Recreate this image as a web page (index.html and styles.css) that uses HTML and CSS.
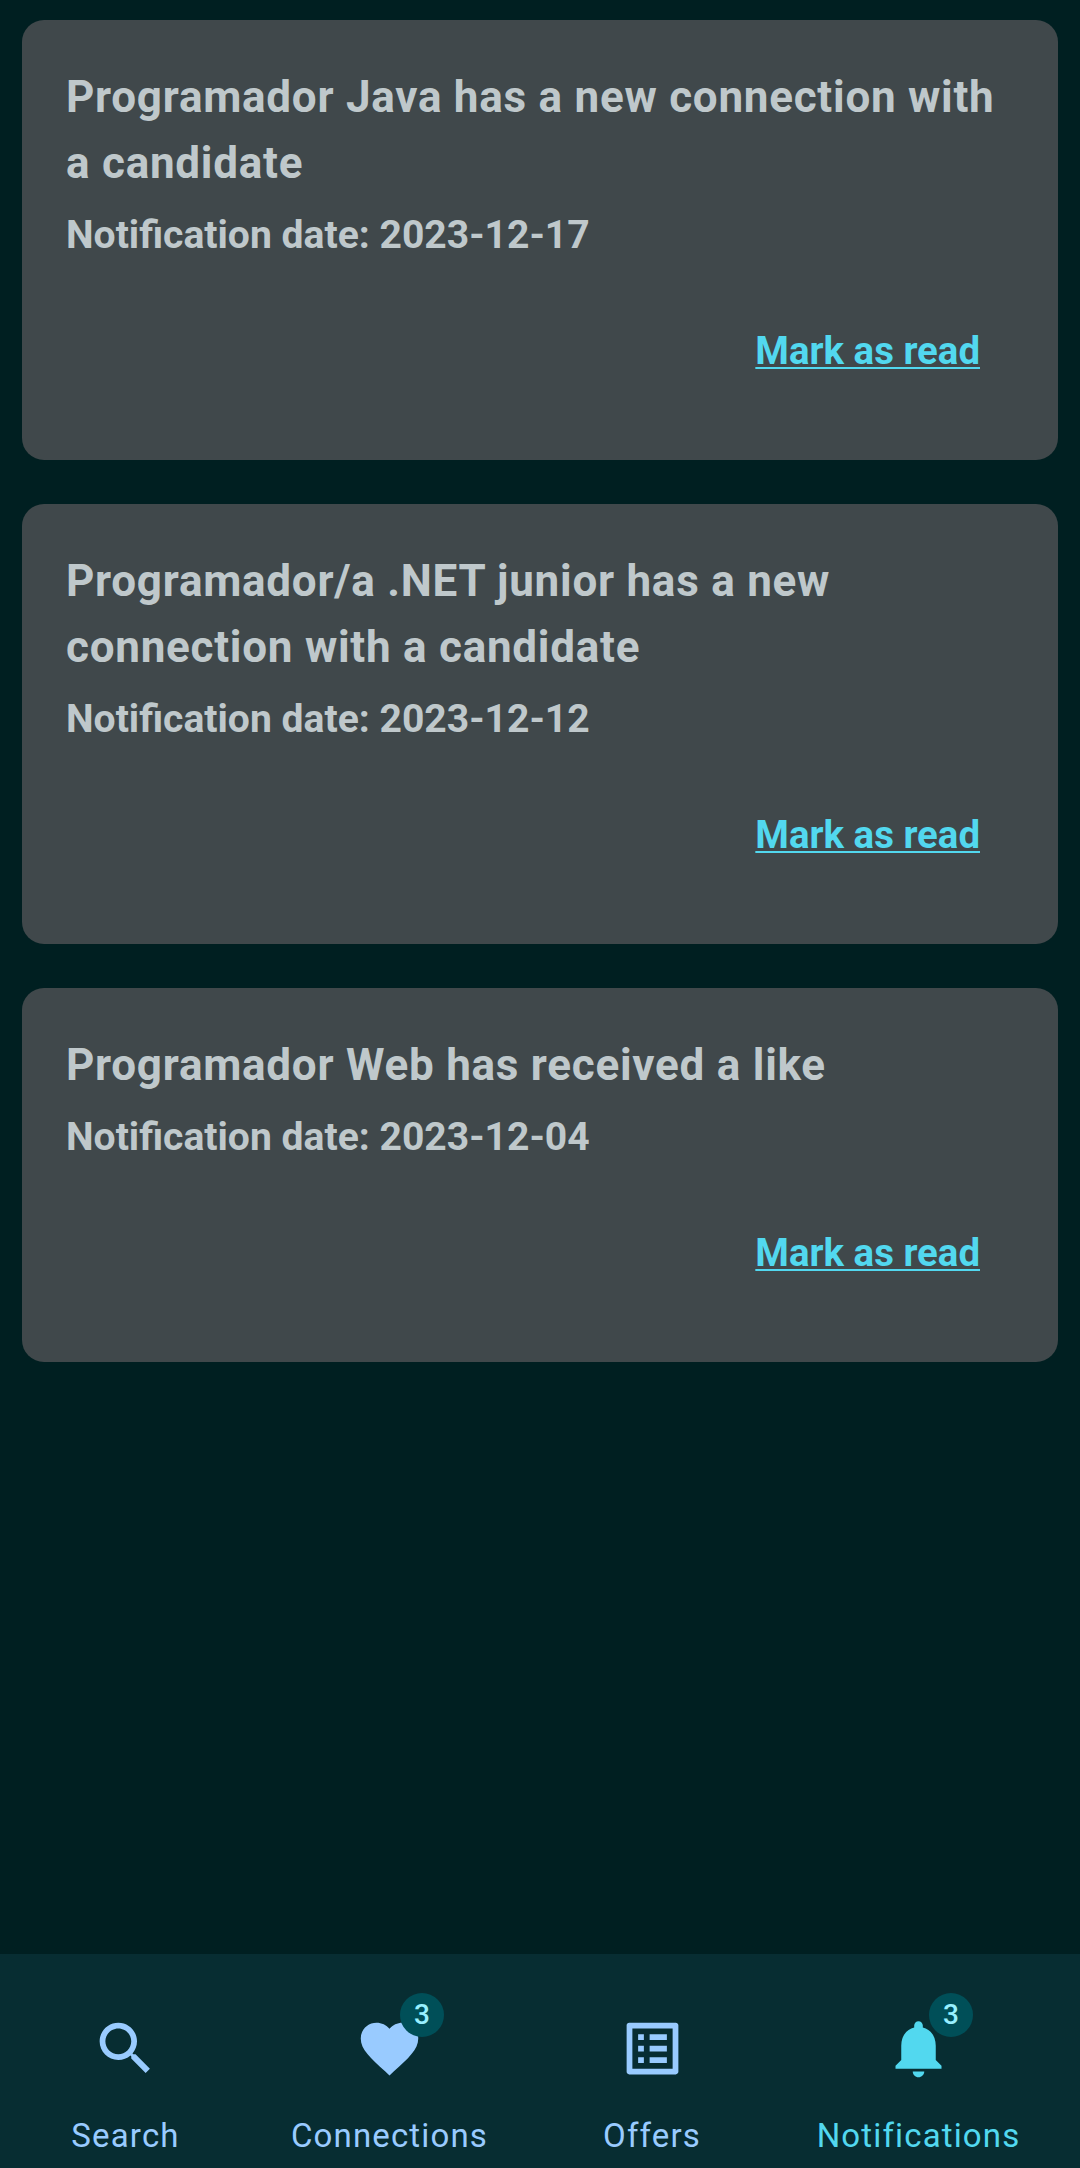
FILE: index.html
```html
<!DOCTYPE html>
<html lang="en">
<head>
<meta charset="utf-8">
<title>Notifications</title>
<link rel="stylesheet" href="styles.css">
</head>
<body>
<main class="list">
  <article class="card">
    <h2 class="title">Programador Java has a new connection with a candidate</h2>
    <p class="date">Notification date: 2023-12-17</p>
    <a class="action">Mark as read</a>
  </article>
  <article class="card">
    <h2 class="title">Programador/a .NET junior has a new connection with a candidate</h2>
    <p class="date">Notification date: 2023-12-12</p>
    <a class="action">Mark as read</a>
  </article>
  <article class="card">
    <h2 class="title">Programador Web has received a like</h2>
    <p class="date">Notification date: 2023-12-04</p>
    <a class="action">Mark as read</a>
  </article>
</main>
<nav class="bar">
  <div class="item">
    <span class="icon"><svg viewBox="0 0 24 24"><path d="M15.5 14h-.79l-.28-.27C15.41 12.59 16 11.11 16 9.5 16 5.91 13.09 3 9.5 3S3 5.91 3 9.5 5.91 16 9.5 16c1.61 0 3.09-.59 4.23-1.57l.27.28v.79l5 4.99L20.49 19l-4.99-5zm-6 0C7.01 14 5 11.99 5 9.5S7.01 5 9.5 5 14 7.01 14 9.5 11.99 14 9.5 14z"/></svg></span>
    <span>Search</span>
  </div>
  <div class="item">
    <span class="icon"><svg viewBox="0 0 24 24"><path d="M12 21.35l-1.45-1.32C5.4 15.36 2 12.28 2 8.5 2 5.42 4.42 3 7.5 3c1.74 0 3.41.81 4.5 2.09C13.09 3.81 14.76 3 16.5 3 19.58 3 22 5.42 22 8.5c0 3.78-3.4 6.86-8.55 11.54L12 21.35z"/></svg><b class="badge">3</b></span>
    <span>Connections</span>
  </div>
  <div class="item">
    <span class="icon"><svg viewBox="0 0 24 24"><path d="M19 5v14H5V5h14m1.1-2H3.9c-.5 0-.9.4-.9.9v16.2c0 .4.4.9.9.9h16.2c.4 0 .9-.5.9-.9V3.9c0-.5-.5-.9-.9-.9zM11 7h6v2h-6V7zm0 4h6v2h-6v-2zm0 4h6v2h-6zM7 7h2v2H7zm0 4h2v2H7zm0 4h2v2H7z"/></svg></span>
    <span>Offers</span>
  </div>
  <div class="item active">
    <span class="icon"><svg viewBox="0 0 24 24"><path d="M12 22c1.1 0 2-.9 2-2h-4c0 1.1.89 2 2 2zm6-6v-5c0-3.07-1.64-5.64-4.5-6.32V4c0-.83-.67-1.5-1.5-1.5s-1.5.67-1.5 1.5v.68C7.63 5.36 6 7.92 6 11v5l-2 2v1h16v-1l-2-2z"/></svg><b class="badge">3</b></span>
    <span>Notifications</span>
  </div>
</nav>
</body>
</html>
```
FILE: styles.css
```css
* { box-sizing: border-box; }
body {
  margin: 0;
  height: 2168px;
  display: flex;
  flex-direction: column;
  background: #001f21;
  font-family: Roboto, sans-serif;
}
.list {
  flex: 1;
  display: flex;
  flex-direction: column;
  gap: 44px;
  padding: 20px 22px;
}
.card {
  display: flex;
  flex-direction: column;
  padding: 44px 44px 77px;
  border-radius: 22px;
  background: #40484b;
  color: #bfc8cb;
}
.title {
  margin: 0;
  font-size: 44px;
  font-weight: 700;
  line-height: 66px;
  letter-spacing: 0.74px;
}
.date {
  margin: 6px 0 0;
  font-size: 39.1px;
  font-weight: 700;
  line-height: 66px;
}
.action {
  align-self: flex-end;
  margin: 50px 34px 0 0;
  font-size: 38.4px;
  font-weight: 700;
  line-height: 65px;
  color: #52d8ef;
  text-decoration: underline 2px;
  text-underline-offset: 3px;
}
.bar {
  height: 214px;
  display: grid;
  grid-template-columns: 251px 277px 248px 285px;
  padding-top: 60px;
  background: #072d32;
  color: #99cbff;
}
.item {
  display: flex;
  flex-direction: column;
  align-items: center;
  gap: 31px;
  font-size: 33px;
  line-height: 44px;
  letter-spacing: 1.15px;
}
.active { color: #52d8ef; }
.icon { position: relative; width: 69px; height: 69px; }
.icon svg { display: block; width: 69px; height: 69px; fill: currentColor; }
.badge {
  position: absolute;
  left: 45px;
  top: -21px;
  width: 44px;
  height: 44px;
  border-radius: 50%;
  background: #004f58;
  color: #97f0ff;
  font-size: 28px;
  font-weight: 500;
  line-height: 44px;
  letter-spacing: 0;
  text-align: center;
}
```
